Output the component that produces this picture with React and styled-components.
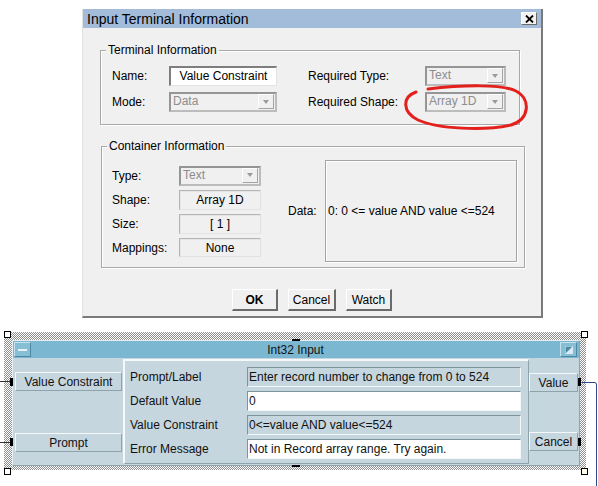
import React from "react";
import styled, { createGlobalStyle } from "styled-components";

const GlobalStyle = createGlobalStyle`
  html, body {
    margin: 0;
    padding: 0;
    background: #fff;
  }
  body {
    font-family: "Liberation Sans", Arial, sans-serif;
    font-size: 12px;
    color: #000;
  }
`;

export default function App() {
  return (
    <Page>
      <GlobalStyle />
      <Dialog>
        <TitleBar>
          <span>Input Terminal Information</span>
          <CloseButton>
            <svg width="9" height="8" viewBox="0 0 9 8">
              <path d="M1 0.5 L8 7.5 M8 0.5 L1 7.5" stroke="#000" strokeWidth="1.8" />
            </svg>
          </CloseButton>
        </TitleBar>

        <GroupBox $margin="22px 0 0 17px" $width={420} $height={75}>
          <Legend>Terminal Information</Legend>
          <TerminalGrid>
            <Label>Name:</Label>
            <TextInput>Value Constraint</TextInput>
            <span />
            <Label>Required Type:</Label>
            <Dropdown value="Text" />
            <Label>Mode:</Label>
            <Dropdown value="Data" />
            <span />
            <Label>Required Shape:</Label>
            <Dropdown value="Array 1D" />
          </TerminalGrid>
        </GroupBox>

        <GroupBox $margin="21px 0 0 18px" $width={424} $height={122}>
          <Legend>Container Information</Legend>
          <ContainerRow>
            <ContainerGrid>
              <Label>Type:</Label>
              <Dropdown value="Text" />
              <Label>Shape:</Label>
              <ReadBox>Array 1D</ReadBox>
              <Label>Size:</Label>
              <ReadBox>[ 1 ]</ReadBox>
              <Label>Mappings:</Label>
              <ReadBox>None</ReadBox>
            </ContainerGrid>
            <DataLabel>Data:</DataLabel>
            <DataBox>0: 0 &lt;= value AND value &lt;=524</DataBox>
          </ContainerRow>
        </GroupBox>

        <ButtonRow>
          <DialogButton $width={46} $bold>OK</DialogButton>
          <DialogButton $width={48}>Cancel</DialogButton>
          <DialogButton $width={46}>Watch</DialogButton>
        </ButtonRow>
      </Dialog>

      <Frame>
        <Panel>
          <PanelTitle>
            <TitleButton>
              <Dash />
            </TitleButton>
            <span>Int32 Input</span>
            <TitleButton>
              <svg width="8" height="8" viewBox="0 0 8 8">
                <rect x="0" y="0" width="8" height="8" fill="#4f8aa6" />
                <path d="M0 8 L8 0 L8 8 Z" fill="#d9ecf4" />
                <path d="M0 0 H8 M0 0 V8" stroke="#eaf5fa" strokeWidth="1" />
              </svg>
            </TitleButton>
          </PanelTitle>
          <PanelBody>
            <SideColumn $width={110} $padding="14px 1px 13px 2px">
              <PinButton>Value Constraint</PinButton>
              <PinButton>Prompt</PinButton>
            </SideColumn>
            <CenterPanel>
              <FieldGrid>
                <FieldLabel>Prompt/Label</FieldLabel>
                <Field>Enter record number to change from 0 to 524</Field>
                <FieldLabel>Default Value</FieldLabel>
                <Field $white>0</Field>
                <FieldLabel>Value Constraint</FieldLabel>
                <Field>0&lt;=value AND value&lt;=524</Field>
                <FieldLabel>Error Message</FieldLabel>
                <Field $white>Not in Record array range. Try again.</Field>
              </FieldGrid>
            </CenterPanel>
            <SideColumn $width={51} $padding="15px 2px 14px 0">
              <PinButton>Value</PinButton>
              <PinButton>Cancel</PinButton>
            </SideColumn>
          </PanelBody>
        </Panel>
      </Frame>

      <Overlay width="598" height="486" viewBox="0 0 598 486">
        <path
          d="M428 89 C462 85 502 84 516 91 C531 99 530 119 511 125 C484 131 438 129 418 120 C402 112 402 97 416 92"
          fill="none"
          stroke="#e3201c"
          strokeWidth="3"
          strokeLinecap="round"
        />
        <path d="M0 381.5 H11 M0 442.5 H11" stroke="#333" strokeWidth="1" />
        <path d="M582 382.5 H595 Q596.5 382.5 596.5 385 V486" fill="none" stroke="#2b4a8a" strokeWidth="1" />
        <rect x="10" y="378" width="3" height="8" fill="#000" />
        <rect x="10" y="438" width="3" height="8" fill="#000" />
        <rect x="578" y="378" width="3" height="8" fill="#000" />
        <rect x="578" y="438" width="3" height="8" fill="#000" />
        <rect x="292" y="339" width="8" height="2" fill="#000" />
        <rect x="292" y="465" width="8" height="2" fill="#000" />
        <rect x="4.5" y="331.5" width="6" height="6" fill="#fff" stroke="#000" />
        <rect x="581.5" y="331.5" width="6" height="6" fill="#fff" stroke="#000" />
        <rect x="4.5" y="468.5" width="6" height="6" fill="#fff" stroke="#000" />
        <rect x="581.5" y="468.5" width="6" height="6" fill="#fffde8" stroke="#000" />
      </Overlay>
    </Page>
  );
}

function Dropdown({ value }) {
  return (
    <Select>
      <SelectText>{value}</SelectText>
      <SelectArrow>
        <Triangle />
      </SelectArrow>
    </Select>
  );
}

const Page = styled.div`
  position: relative;
  display: flow-root;
  width: 598px;
  height: 486px;
  overflow: hidden;
`;

const Dialog = styled.div`
  margin: 9px 0 0 82px;
  width: 461px;
  height: 309px;
  box-sizing: border-box;
  background: #f0f0f0;
  border-left: 1px solid #e2e2e2;
  border-right: 2px solid #7a7a7a;
  border-bottom: 2px solid #7a7a7a;
  display: flex;
  flex-direction: column;
`;

const TitleBar = styled.div`
  height: 19px;
  flex: none;
  background: #a3bcda;
  display: flex;
  align-items: center;
  justify-content: space-between;
  padding: 0 4px 0 4px;
  font-size: 14px;
`;

const CloseButton = styled.div`
  width: 16px;
  height: 13px;
  box-sizing: border-box;
  background: #f2f2f2;
  border: 1px solid;
  border-color: #fff #6a6a6a #6a6a6a #fff;
  display: flex;
  align-items: center;
  justify-content: center;
`;

const GroupBox = styled.div`
  margin: ${(p) => p.$margin};
  width: ${(p) => p.$width}px;
  height: ${(p) => p.$height}px;
  box-sizing: border-box;
  flex: none;
  border: 1px solid #a8a8a8;
  box-shadow: inset 1px 1px 0 #fff, 1px 1px 0 #fff;
`;

const Legend = styled.span`
  display: block;
  width: fit-content;
  margin: -8px 0 0 5px;
  padding: 0 2px;
  line-height: 14px;
  background: #f0f0f0;
`;

const TerminalGrid = styled.div`
  display: grid;
  grid-template-columns: 57px 108px 31px 117px 81px;
  grid-template-rows: 20px 20px;
  row-gap: 6px;
  margin: 9px 0 0 11px;
  align-items: center;
`;

const Label = styled.span`
  line-height: 14px;
`;

const TextInput = styled.div`
  height: 20px;
  box-sizing: border-box;
  background: #fff;
  border: 1px solid;
  border-width: 2px 1px 1px 2px;
  border-color: #7e7e7e #e3e3e3 #e3e3e3 #7e7e7e;
  line-height: 16px;
  text-align: center;
`;

const Select = styled.div`
  height: 20px;
  box-sizing: border-box;
  border: 2px solid;
  border-color: #959595 #bcbcbc #bcbcbc #959595;
  background: #f0f0f0;
  display: flex;
  align-items: stretch;
`;

const SelectText = styled.span`
  flex: 1;
  color: #8d8d8d;
  padding-left: 2px;
  line-height: 15px;
  white-space: nowrap;
`;

const SelectArrow = styled.span`
  width: 16px;
  margin: 0 1px 1px 0;
  box-sizing: border-box;
  border: 1px solid;
  border-color: #fff #a4a4a4 #a4a4a4 #fff;
  display: flex;
  align-items: center;
  justify-content: center;
`;

const Triangle = styled.span`
  width: 0;
  height: 0;
  border-left: 3.5px solid transparent;
  border-right: 3.5px solid transparent;
  border-top: 4px solid #9a9a9a;
`;

const ContainerRow = styled.div`
  display: flex;
  align-items: center;
  margin-top: 7px;
  padding-left: 10px;
`;

const ContainerGrid = styled.div`
  display: grid;
  grid-template-columns: 67px 82px;
  grid-template-rows: 21px 20px 20px 19px;
  row-gap: 4px;
  align-items: center;
`;

const ReadBox = styled.div`
  height: 100%;
  box-sizing: border-box;
  border: 1px solid;
  border-color: #b4b4b4 #e2e2e2 #e2e2e2 #b4b4b4;
  box-shadow: inset 1px 1px 0 #e6e6e6;
  display: flex;
  align-items: center;
  justify-content: center;
`;

const DataLabel = styled.span`
  margin-left: 27px;
  width: 37px;
  line-height: 14px;
`;

const DataBox = styled.div`
  width: 192px;
  height: 102px;
  box-sizing: border-box;
  border: 1px solid #a4a4a4;
  box-shadow: inset 1px 1px 0 #fff, 1px 1px 0 #fff;
  display: flex;
  align-items: center;
  padding-left: 2px;
`;

const ButtonRow = styled.div`
  display: flex;
  justify-content: center;
  gap: 10px;
  margin-top: 21px;
`;

const DialogButton = styled.div`
  width: ${(p) => p.$width}px;
  height: 22px;
  box-sizing: border-box;
  background: #f0f0f0;
  border-style: solid;
  border-width: 1px 2px 2px 1px;
  border-color: #fff #6b6b6b #6b6b6b #fff;
  display: flex;
  align-items: center;
  justify-content: center;
  font-weight: ${(p) => (p.$bold ? 700 : 400)};
`;

const Frame = styled.div`
  margin: 14px 0 0 4px;
  width: 582px;
  height: 138px;
  box-sizing: border-box;
  padding: 8px 6px 4px 8px;
  background: repeating-conic-gradient(#8e8e8e 0 25%, #ffffff 0 50%) 0 0 / 2px 2px;
`;

const Panel = styled.div`
  height: 100%;
  box-sizing: border-box;
  background: #c6d6df;
  border: 1px solid;
  border-color: #e6eef2 #8fa3ad #8fa3ad #e6eef2;
  display: flex;
  flex-direction: column;
`;

const PanelTitle = styled.div`
  height: 17px;
  flex: none;
  box-sizing: border-box;
  background: #7bb7d1;
  display: grid;
  grid-template-columns: 17px 1fr 17px;
  align-items: center;
  padding: 1px 2px 1px 1px;
  text-align: center;
  color: #111;
`;

const TitleButton = styled.div`
  width: 17px;
  height: 15px;
  box-sizing: border-box;
  background: #86bed6;
  border: 1px solid;
  border-color: #c4e2ee #4f87a2 #4f87a2 #c4e2ee;
  display: flex;
  align-items: center;
  justify-content: center;
`;

const Dash = styled.span`
  width: 9px;
  height: 2px;
  background: #e6f4fa;
`;

const PanelBody = styled.div`
  flex: 1;
  display: flex;
`;

const SideColumn = styled.div`
  width: ${(p) => p.$width}px;
  box-sizing: border-box;
  display: flex;
  flex-direction: column;
  justify-content: space-between;
  padding: ${(p) => p.$padding};
  flex: none;
`;

const PinButton = styled.div`
  height: 19px;
  box-sizing: border-box;
  background: #c6d6df;
  border: 1px solid;
  border-color: #f4f8fa #8fa3ad #8fa3ad #f4f8fa;
  display: flex;
  align-items: center;
  justify-content: center;
  white-space: nowrap;
  color: #111;
`;

const CenterPanel = styled.div`
  width: 406px;
  margin: 1px 0;
  box-sizing: border-box;
  flex: none;
  border: 1px solid;
  border-width: 2px 1px 1px 2px;
  border-color: #f6f9fb #8fa3ad #8fa3ad #f6f9fb;
  padding: 6px 0 0 5px;
`;

const FieldGrid = styled.div`
  display: grid;
  grid-template-columns: 117px 274px;
  grid-auto-rows: 20px;
  row-gap: 4px;
  align-items: center;
`;

const FieldLabel = styled.span`
  color: #111;
`;

const Field = styled.div`
  height: 20px;
  box-sizing: border-box;
  background: ${(p) => (p.$white ? "#fff" : "#c6d6df")};
  border: 1px solid;
  border-color: #7f939d #f4f8fa #f4f8fa #7f939d;
  padding-left: 1px;
  line-height: 18px;
  white-space: nowrap;
  overflow: hidden;
  color: #111;
`;

const Overlay = styled.svg`
  position: absolute;
  left: 0;
  top: 0;
  pointer-events: none;
`;
